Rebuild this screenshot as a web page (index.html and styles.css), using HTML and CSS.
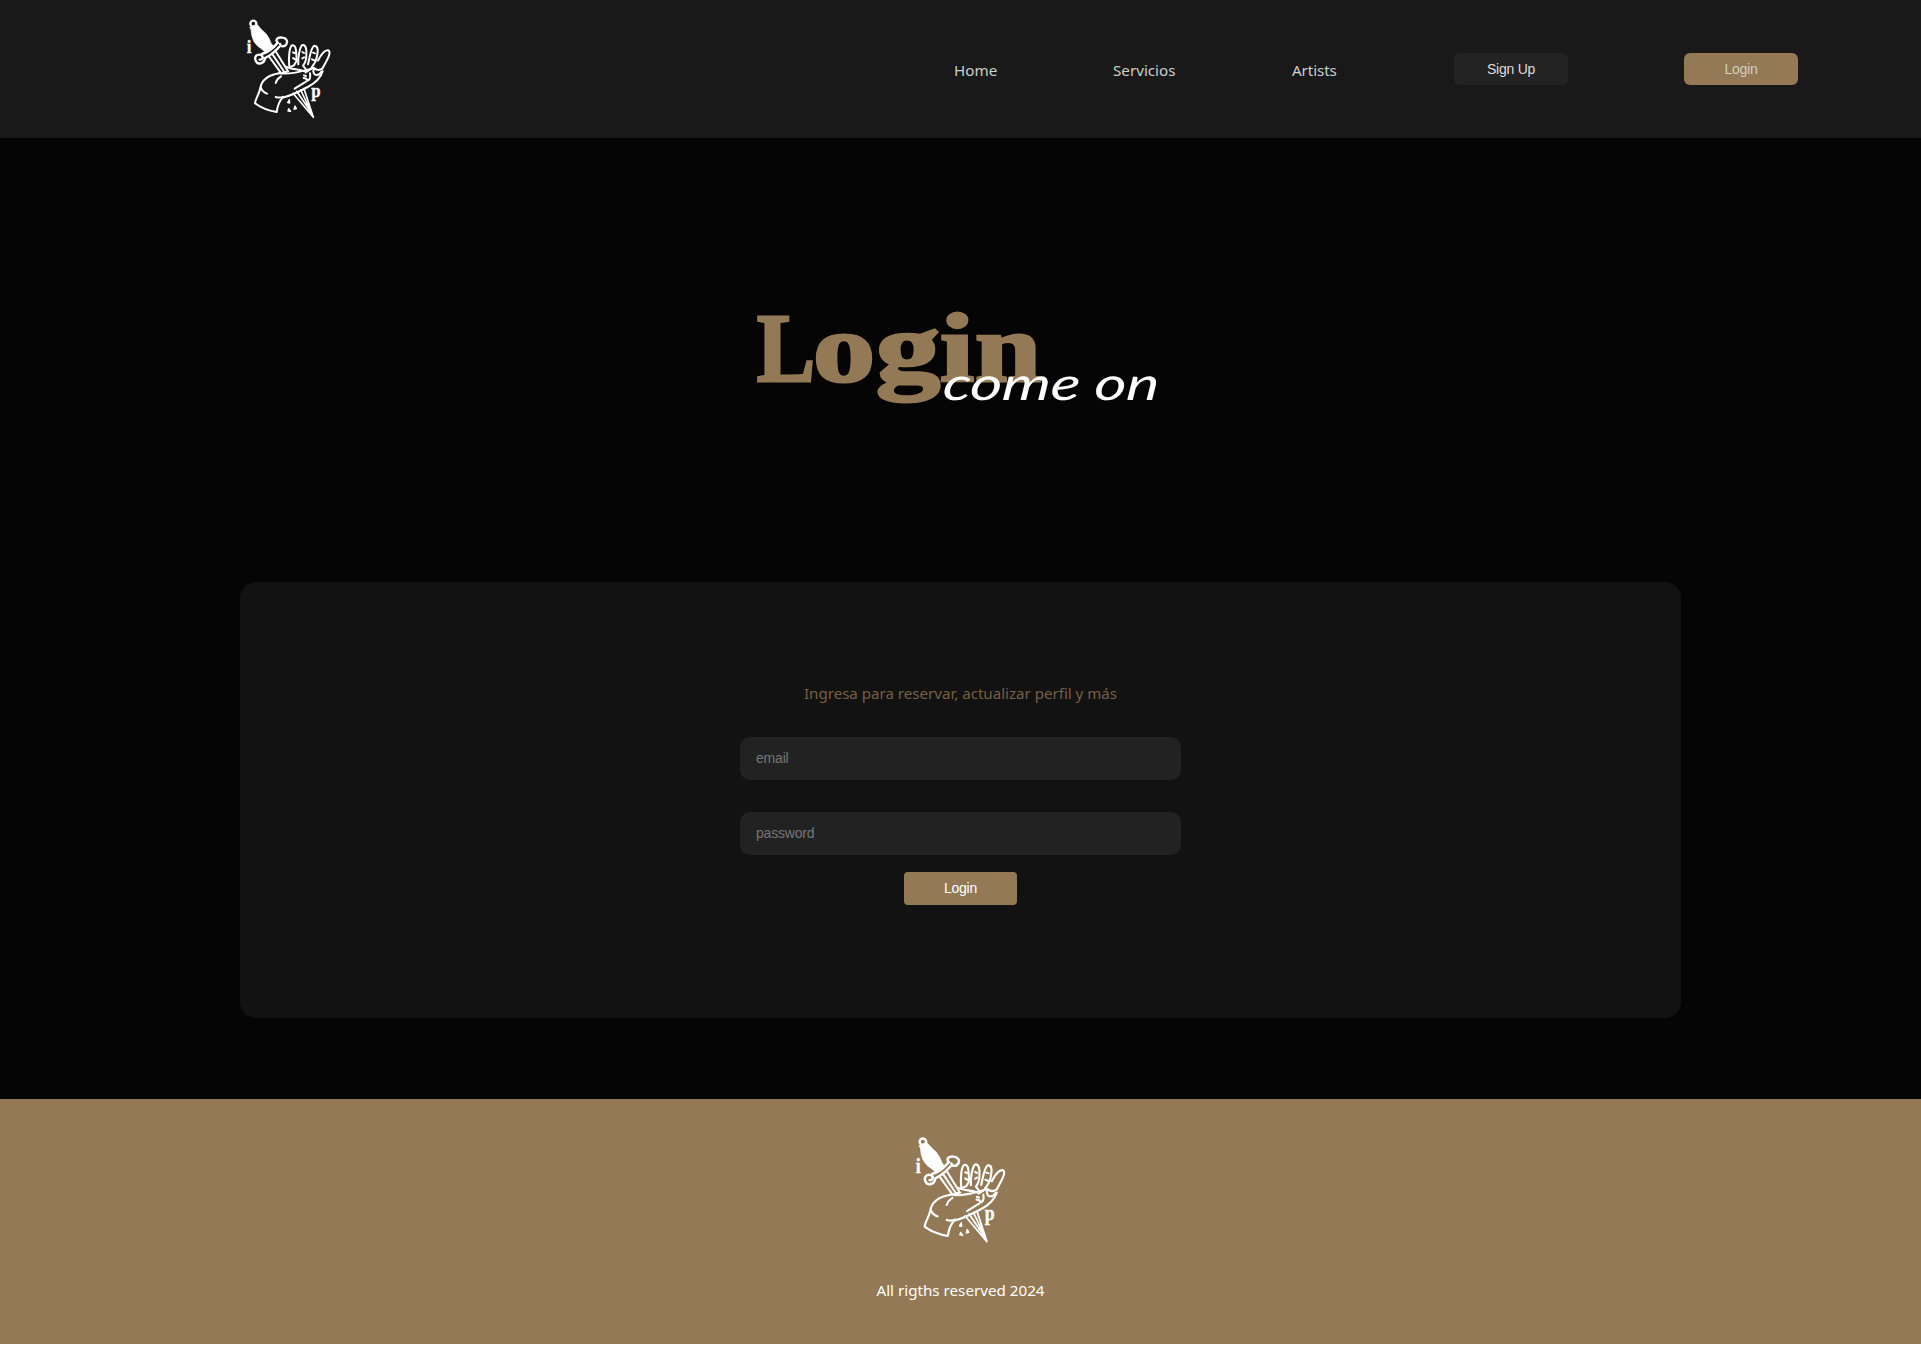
FILE: index.html
```html
<!DOCTYPE html>
<html lang="es">
<head>
<meta charset="utf-8">
<title>Login</title>
<link rel="stylesheet" href="styles.css">
</head>
<body>
<svg class="defs" aria-hidden="true">
  <symbol id="logo" viewBox="0 0 330 360" overflow="visible">
    <g fill="none" stroke="#fff" stroke-width="6" stroke-linecap="round" stroke-linejoin="round">
      <circle cx="55" cy="47" r="9" stroke-width="7"/>
      <path fill="#fff" stroke-width="2" d="M45 58L66 49L80 65Q94 75 102 91L109 107L116 115L89 131L80 123Q65 115 56 99Q49 84 48 66Z"/>
      <path stroke-width="7" d="M80 138Q112 124 128 104C118 94 130 87 142 89C154 90 160 100 154 109C149 117 137 117 135 108"/>
      <path stroke-width="7" d="M133 116Q114 138 90 150C88 168 67 172 62 158C57 146 66 137 77 141C87 145 83 156 74 155"/>
      <path d="M80 138Q106 134 128 104M101 144L137 194M111 137L148 192M121 128L159 190M139 195L160 190"/>
      <path d="M132 196C98 202 80 216 76 240C73 258 61 272 60 286C78 300 100 308 125 312C128 292 134 278 143 269C168 263 196 249 218 237C240 226 258 207 263 190"/>
      <path d="M132 196C173 201 207 188 237 180M153 176C166 184 190 183 209 190M138 205Q126 212 122 225M77 238Q82 252 96 257M122 267Q134 271 146 266"/>
      <path d="M163 178C160 150 163 117 171 112C183 110 183 126 184 139L185 158L177 172ZM174 133L178 135M174 150L180 154"/>
      <path d="M190 169C188 148 195 116 202 111C214 109 215 128 214 142C214 156 211 165 204 173L212 183M202 132L207 135M202 151L207 148"/>
      <path d="M219 169C224 150 227 118 238 113C251 114 249 131 246 145C244 158 239 167 230 178M234 134L240 136M231 154L238 157"/>
      <path d="M249 158C258 140 270 125 280 127C291 133 275 158 262 182Q249 190 238 181Q231 191 240 200Q252 204 259 191"/>
      <path d="M230 181L212 193M225 196Q228 214 218 218Q214 210 206 210M207 202L213 204M179 242L213 221"/>
      <path d="M174 256L235 328L207 242M185 250L232 319M197 246L235 326" stroke-width="5"/>
      <path fill="#fff" stroke-width="4" d="M163 275L158 284L164 285ZM161 302L159 309L167 310ZM180 294L177 304L184 302Z"/>
    </g>
    <text class="mark" x="35" y="136" font-size="58" textLength="14" lengthAdjust="spacingAndGlyphs">i</text>
    <text class="mark" x="229" y="267" font-size="56" textLength="28" lengthAdjust="spacingAndGlyphs">p</text>
  </symbol>
</svg>
<header class="header">
  <a class="brand" href="#" aria-label="Home"><svg class="logo"><use href="#logo"/></svg></a>
  <nav class="nav">
    <a class="link home" href="#">Home</a>
    <a class="link services" href="#">Servicios</a>
    <a class="link artists" href="#">Artists</a>
    <button class="button signup">Sign Up</button>
    <button class="button login">Login</button>
  </nav>
</header>
<main class="main">
  <h1 class="hero">
    <svg class="title" viewBox="0 0 440 120">
      <text class="display" y="81"><tspan x="16" textLength="58" lengthAdjust="spacingAndGlyphs">L</tspan><tspan x="72" textLength="62" lengthAdjust="spacingAndGlyphs">o</tspan><tspan x="135" textLength="64" lengthAdjust="spacingAndGlyphs">g</tspan><tspan x="199" textLength="34" lengthAdjust="spacingAndGlyphs">i</tspan><tspan x="234" textLength="66" lengthAdjust="spacingAndGlyphs">n</tspan></text>
      <text class="script" transform="translate(201 100) skewX(-5)" textLength="216" lengthAdjust="spacingAndGlyphs">come on</text>
    </svg>
  </h1>
  <form class="card">
    <p class="intro">Ingresa para reservar, actualizar perfil y más</p>
    <input class="field" type="email" placeholder="email">
    <input class="field" type="password" placeholder="password">
    <button class="button submit" type="button">Login</button>
  </form>
</main>
<footer class="footer">
  <svg class="footer-logo"><use href="#logo"/></svg>
  <p class="rights">All rigths reserved 2024</p>
</footer>
</body>
</html>
```
FILE: styles.css
```css
* { box-sizing: border-box; }
body {
  margin: 0;
  background: #fff;
  color: #fff;
  font-family: "Noto Sans", "Open Sans", sans-serif;
  font-size: 15.2px;
}
.defs { display: block; width: 0; height: 0; }
.header {
  display: flex;
  justify-content: space-between;
  height: 138px;
  padding: 8px 123px 0 235px;
  background: #191919;
}
.logo { display: block; width: 110px; height: 120px; overflow: visible; }
.mark { fill: #fff; stroke: #fff; stroke-width: 1; font-family: "Liberation Serif", serif; font-weight: bold; }
.nav { display: flex; gap: 116px; height: 122px; align-items: center; }
.link { padding-top: 2px; color: #c9cfca; text-decoration: none; white-space: nowrap; line-height: 20px; }
.home { width: 44px; padding-left: 1px; }
.services { width: 63px; }
.artists { width: 46px; letter-spacing: -.1px; }
.button {
  width: 114px;
  height: 32px;
  padding: 0;
  border: 0;
  border-radius: 6px;
  color: #ddd;
  font: 14px "Liberation Sans", Arial, sans-serif;
  letter-spacing: -.25px;
}
.signup { background: #232323; }
.login { background: #937955; color: #d5cdc0; }
.main {
  display: flex;
  flex-direction: column;
  align-items: center;
  height: 961px;
  padding-top: 162px;
  background: #050505;
}
.hero { width: 440px; height: 120px; margin: 0 0 162px; }
.title { display: block; width: 440px; height: 120px; overflow: visible; }
.display {
  fill: #937955;
  stroke: #937955;
  stroke-width: 3;
  font: bold 97px "Liberation Serif", serif;
}
.script { fill: #fff; font: italic 46px Lato, sans-serif; }
.card {
  display: flex;
  flex-direction: column;
  align-items: center;
  width: 1441px;
  height: 436px;
  padding-top: 100px;
  border-radius: 16px;
  background: #121212;
}
.intro { margin: 0 0 33px; color: #756044; font-size: 15.1px; line-height: 22px; }
.field {
  width: 441px;
  height: 43px;
  margin: 0 0 32px;
  padding: 0 16px 2px;
  border: 0;
  border-radius: 10px;
  background: #222;
  color: #fff;
  font: 14px "Liberation Sans", Arial, sans-serif;
  letter-spacing: -.2px;
}
.field::placeholder { color: #757575; }
.submit { height: 33px; width: 113px; margin-top: -15px; padding-bottom: 2px; border-radius: 4px; background: #937955; color: #fff; }
.footer {
  display: flex;
  flex-direction: column;
  align-items: center;
  height: 245px;
  padding-top: 26px;
  background: #937955;
}
.footer-logo { width: 118px; height: 128px; margin-right: -3px; overflow: visible; }
.rights { margin: 26px 0 0; line-height: 22px; }
```
